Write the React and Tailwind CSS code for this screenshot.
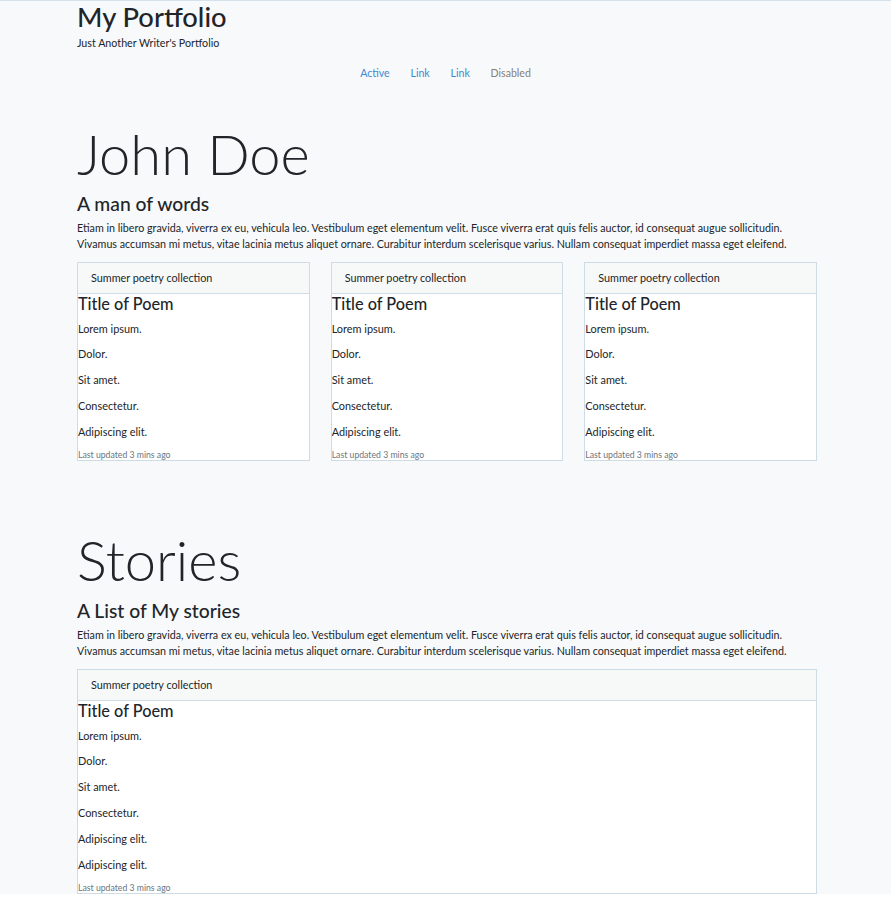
import React from "react";

const items1 = ["Lorem ipsum.", "Dolor.", "Sit amet.", "Consectetur.", "Adipiscing elit."];
const items2 = ["Lorem ipsum.", "Dolor.", "Sit amet.", "Consectetur.", "Adipiscing elit.", "Adipiscing elit."];

function Card({ items }) {
  return (
    <div className="border border-[#cddce5] bg-white">
      <div className="border-b border-[#cddce5] bg-[#f7f8f8] px-[13px] py-[7px] text-[10.8px] leading-[16px] text-[#212529]">
        Summer poetry collection
      </div>
      <div className="text-[#212529]">
        <h4 className="text-[16.3px] leading-[19px] font-medium">Title of Poem</h4>
        {items.map((t, i) => (
          <p key={i} className={`text-[10.9px] leading-[16px] ${i === 0 ? "mt-[8px]" : "mt-[9.8px]"}`}>
            {t}
          </p>
        ))}
        <div className="mt-[9.5px] text-[8.7px] leading-[11px] text-[#6c757d]">Last updated 3 mins ago</div>
      </div>
    </div>
  );
}

function Para() {
  return (
    <p className="mt-[5px] text-[10.73px] leading-[16px] text-[#212529] whitespace-nowrap">
      Etiam in libero gravida, viverra ex eu, vehicula leo. Vestibulum eget elementum velit. Fusce viverra erat quis felis auctor, id consequat augue sollicitudin.
      <br />
      Vivamus accumsan mi metus, vitae lacinia metus aliquet ornare. Curabitur interdum scelerisque varius. Nullam consequat imperdiet massa eget eleifend.
    </p>
  );
}

export default function App() {
  return (
    <div className="min-h-screen bg-white" style={{ fontFamily: "Lato, 'Open Sans', sans-serif" }}>
      <div className="border-t border-[#d3e2ec] bg-[#f8f9fa]">
        <div className="ml-[77px] w-[740px]">
          <h1 className="text-[27.3px] leading-[32px] font-medium text-[#212529]">My Portfolio</h1>
          <p className="mt-[2px] text-[10.7px] leading-[16px] text-[#212529]">Just Another Writer's Portfolio</p>
        </div>
        <nav className="mt-[9px] flex justify-center text-[10.6px] leading-[16px]">
          <a className="px-[10.4px] py-[5px] text-[#3d8bd6]">Active</a>
          <a className="px-[10.4px] py-[5px] text-[#3d8bd6]">Link</a>
          <a className="px-[10.4px] py-[5px] text-[#3d8bd6]">Link</a>
          <a className="px-[10.4px] py-[5px] text-[#8a7f76]">Disabled</a>
        </nav>
        <div className="ml-[77px] w-[740px]">
          <section className="mt-[30px]">
            <h1 className="text-[56px] leading-[75px] font-light text-[#212529]">John Doe</h1>
            <h3 className="mt-[2px] text-[19.3px] leading-[22px] font-medium text-[#212529]">A man of words</h3>
            <Para />
            <div className="mt-[9.5px] grid grid-cols-3 gap-[21px]">
              <Card items={items1} />
              <Card items={items1} />
              <Card items={items1} />
            </div>
          </section>
          <section className="mt-[61px]">
            <h1 className="text-[56px] leading-[75px] font-light text-[#212529]">Stories</h1>
            <h3 className="mt-[3px] text-[19.3px] leading-[22px] font-medium text-[#212529]">A List of My stories</h3>
            <Para />
            <div className="mt-[9.5px]">
              <Card items={items2} />
            </div>
          </section>
        </div>
      </div>
    </div>
  );
}
